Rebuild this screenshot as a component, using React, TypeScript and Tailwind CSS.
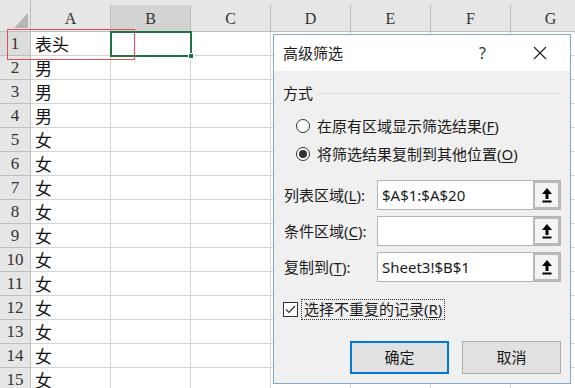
import React from "react";

const COLS = ["A", "B", "C", "D", "E", "F", "G"];
const ROWS: string[] = ["表头", "男", "男", "男", "女", "女", "女", "女", "女", "女", "女", "女", "女", "女", "女"];

const dlgFont = { fontFamily: '"Noto Sans", "Noto Sans CJK SC", sans-serif' };

function UpArrow() {
  return (
    <svg width="10" height="15" viewBox="0 0 10 15">
      <polygon points="5,0 10,6 6.5,6 6.5,11 3.5,11 3.5,6 0,6" fill="#000" />
      <rect x="0.5" y="12.5" width="9" height="2" fill="#000" />
    </svg>
  );
}

function Field({ label, u, value }: { label: string; u: string; value: string }) {
  return (
    <div className="flex h-[30px] items-center">
      <div className="w-[103px] pl-[10px] text-[15px] text-[#1a1a1a]">
        {label}(<span className="underline underline-offset-2">{u}</span>):
      </div>
      <div className="flex h-full flex-1 border border-[#b4b4b4] bg-white">
        <div className="flex flex-1 items-center pl-[4px] text-[15px] text-[#1a1a1a]">{value}</div>
        <div className="flex w-[27px] items-center justify-center border-2 border-[#b9b9b9] bg-[#f3f3f3]">
          <UpArrow />
        </div>
      </div>
    </div>
  );
}

export default function App() {
  return (
    <div className="relative h-[388px] w-[575px] overflow-hidden bg-white">
      {/* spreadsheet */}
      <div className="flex flex-col" style={{ fontFamily: '"Liberation Serif", "Noto Sans CJK SC", serif' }}>
        <div className="flex h-8 bg-[#e6e6e6]">
          <div className="relative h-8 w-[31px] shrink-0 border-b border-r border-[#bdbdbd]">
            <svg className="absolute left-[14px] top-[13px]" width="14" height="15" viewBox="0 0 14 15">
              <polygon points="14,0 14,15 0,15" fill="#b5b5b5" />
            </svg>
          </div>
          {COLS.map((c) => (
            <div key={c} className="flex h-8 w-[80px] shrink-0 flex-col">
              <div className="h-[9px]" />
              <div
                className={`flex flex-1 items-center justify-center border-b border-r border-[#bdbdbd] pt-[2px] text-[16px] text-[#333] ${
                  c === "B" ? "bg-[#d3d3d3]" : ""
                }`}
              >
                {c}
              </div>
            </div>
          ))}
        </div>
        {ROWS.map((v, i) => (
          <div key={i} className="flex h-6">
            <div
              className={`flex w-[31px] shrink-0 items-center justify-center border-b border-r border-[#bdbdbd] text-[17px] text-[#333] ${
                i === 0 ? "bg-[#dcdcdc]" : "bg-[#e6e6e6]"
              }`}
            >
              {i + 1}
            </div>
            {COLS.map((c) => (
              <div
                key={c}
                className="flex w-[80px] shrink-0 items-center border-b border-r border-[#d4d4d4] pl-[4px] text-[17px] text-[#111]"
                style={{ fontFamily: '"Noto Sans CJK SC", serif' }}
              >
                {c === "A" ? v : ""}
              </div>
            ))}
          </div>
        ))}
      </div>

      {/* selected cell B1 */}
      <div className="absolute left-[110px] top-[31px] h-[26px] w-[82px] border-2 border-[#217346]" />
      <div className="absolute left-[188px] top-[53px] h-[6px] w-[6px] border border-white bg-[#217346]" />
      {/* red highlight */}
      <div className="absolute left-[7px] top-[29px] h-[31px] w-[128px] border border-[#e0505a]" />

      {/* dialog */}
      <div
        className="absolute left-[273px] top-[34px] flex h-[350px] w-[298px] flex-col border border-[#7fa9d8] bg-[#f0f0f0] text-[#1a1a1a]"
        style={dlgFont}
      >
        <div className="flex h-[36px] shrink-0 items-center bg-white pl-[9px] text-[15px]">
          <span>高级筛选</span>
          <span className="ml-[136px] text-[16px] text-[#333]">?</span>
          <svg className="ml-[47px]" width="14" height="14" viewBox="0 0 14 14">
            <path d="M1 1 L13 13 M13 1 L1 13" stroke="#222" strokeWidth="1.2" />
          </svg>
        </div>

        <div className="mt-[10px] flex h-6 items-center pl-[9px] pr-[10px] text-[15px]">
          <span>方式</span>
          <div className="ml-[6px] h-px flex-1 bg-[#dcdcdc]" />
        </div>

        <div className="mt-[9px] flex h-6 items-center pl-[22px] text-[15px]">
          <div className="h-[14px] w-[14px] rounded-full border border-[#333] bg-white" />
          <span className="ml-[7px]">
            在原有区域显示筛选结果(<span className="underline underline-offset-2">F</span>)
          </span>
        </div>
        <div className="mt-[4px] flex h-6 items-center pl-[22px] text-[15px]">
          <div className="flex h-[14px] w-[14px] items-center justify-center rounded-full border border-[#333] bg-white">
            <div className="h-[8px] w-[8px] rounded-full bg-[#333]" />
          </div>
          <span className="ml-[7px]">
            将筛选结果复制到其他位置(<span className="underline underline-offset-2">O</span>)
          </span>
        </div>

        <div className="mt-[14px] flex flex-col gap-[6px] pr-[9px]">
          <Field label="列表区域" u="L" value="$A$1:$A$20" />
          <Field label="条件区域" u="C" value="" />
          <Field label="复制到" u="T" value="Sheet3!$B$1" />
        </div>

        <div className="mt-[16px] flex h-[22px] items-center pl-[9px] text-[15px]">
          <div className="flex h-[15px] w-[15px] items-center justify-center border border-[#333] bg-white">
            <svg width="11" height="9" viewBox="0 0 11 9">
              <path d="M1 4.5 L4 7.5 L10 1" fill="none" stroke="#333" strokeWidth="1.2" />
            </svg>
          </div>
          <span className="ml-[3px] border border-dotted border-[#333] px-[2px] leading-[19px]">
            选择不重复的记录(<span className="underline underline-offset-2">R</span>)
          </span>
        </div>

        <div className="mt-[21px] flex justify-end gap-[13px] pr-[9px]">
          <div className="flex h-[33px] w-[99px] items-center justify-center border-2 border-[#0078d7] bg-[#e1e1e1] text-[15px]">
            确定
          </div>
          <div className="flex h-[33px] w-[99px] items-center justify-center border border-[#adadad] bg-[#e1e1e1] text-[15px]">
            取消
          </div>
        </div>
      </div>
    </div>
  );
}
